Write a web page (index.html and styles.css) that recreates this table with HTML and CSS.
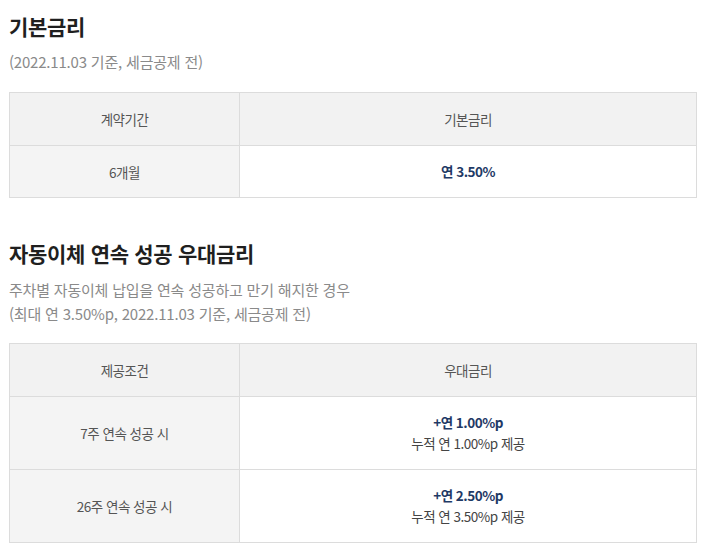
FILE: index.html
```html
<!DOCTYPE html>
<html lang="ko">
<head>
<meta charset="utf-8">
<link rel="stylesheet" href="styles.css">
</head>
<body>
<div class="page">
  <section class="block">
    <h2 class="title">기본금리</h2>
    <p class="desc">(2022.11.03 기준, 세금공제 전)</p>
    <table class="rate">
      <colgroup><col class="c1"><col></colgroup>
      <thead>
        <tr class="head"><th>계약기간</th><th>기본금리</th></tr>
      </thead>
      <tbody>
        <tr class="r1"><th>6개월</th><td><strong>연 3.50%</strong></td></tr>
      </tbody>
    </table>
  </section>
  <section class="block second">
    <h2 class="title">자동이체 연속 성공 우대금리</h2>
    <p class="desc">주차별 자동이체 납입을 연속 성공하고 만기 해지한 경우<br>(최대 연 3.50%p, 2022.11.03 기준, 세금공제 전)</p>
    <table class="rate">
      <colgroup><col class="c1"><col></colgroup>
      <thead>
        <tr class="head"><th>제공조건</th><th>우대금리</th></tr>
      </thead>
      <tbody>
        <tr class="r2"><th>7주 연속 성공 시</th><td><strong>+연 1.00%p</strong><br>누적 연 1.00%p 제공</td></tr>
        <tr class="r2"><th>26주 연속 성공 시</th><td><strong>+연 2.50%p</strong><br>누적 연 3.50%p 제공</td></tr>
      </tbody>
    </table>
  </section>
</div>
</body>
</html>
```
FILE: styles.css
```css
html, body { margin: 0; padding: 0; background: #fff; }
body { font-family: "Noto Sans CJK KR", "Noto Sans", sans-serif; color: #222; }
.page { padding: 12px 12px 0 9px; width: 688px; }
.title { margin: 0; font-size: 21px; line-height: 28px; font-weight: 700; color: #1f1f1f; letter-spacing: -0.3px; }
.desc { margin: 10px 0 0; font-size: 15px; line-height: 24px; color: #8a8a8a; letter-spacing: -0.2px; }
.rate { width: 688px; border-collapse: collapse; margin-top: 18px; table-layout: fixed; font-size: 13.5px; letter-spacing: -0.5px; }
.rate .c1 { width: 230px; }
.rate th, .rate td { border: 1px solid #dcdcdc; text-align: center; font-weight: 400; color: #555; padding: 0; }
.rate thead th { background: #f2f2f2; height: 52px; }
.rate tbody th { background: #f4f4f4; }
.rate td { background: #fff; color: #444; line-height: 21px; }
.rate strong { color: #1f3a66; font-weight: 700; }
.r1 th, .r1 td { height: 51px; }
.r2 th, .r2 td { height: 72px; }
.second { margin-top: 41px; }
.second .desc { margin-top: 11px; }
.second .rate { margin-top: 17px; }
```
